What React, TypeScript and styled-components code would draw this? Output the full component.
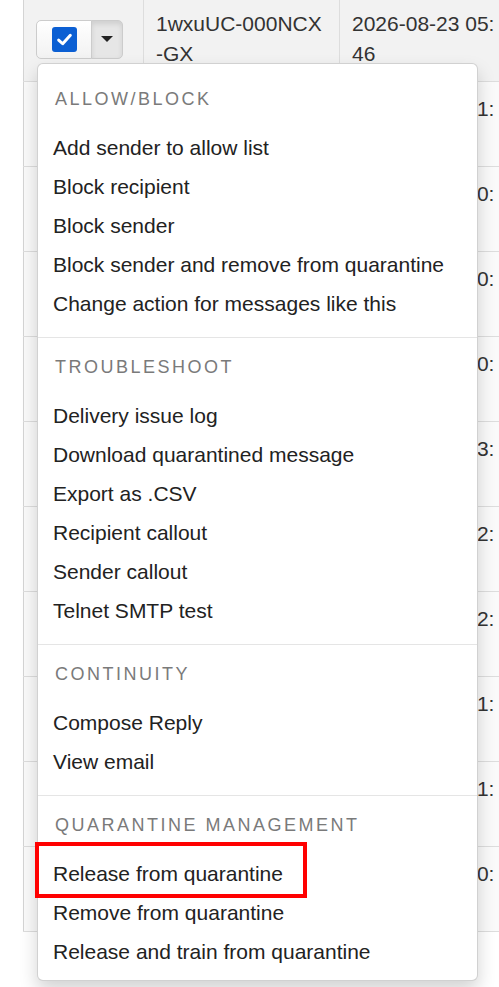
import styled, { createGlobalStyle, css } from 'styled-components'

const GlobalStyle = createGlobalStyle`
  html, body {
    margin: 0;
    padding: 0;
    background: #fff;
  }
  body {
    font-family: "Liberation Sans", Arial, sans-serif;
    font-size: 21px;
    color: #333;
  }
`

const Page = styled.div`
  width: 499px;
  height: 987px;
  overflow: hidden;
  padding-left: 23px;
  box-sizing: border-box;
`

const Table = styled.table`
  margin-top: -3px;
  border-collapse: collapse;
  table-layout: fixed;
  width: 492px;
  border-left: 1px solid #d4d4d4;
`

const Row = styled.tr<{ $active?: boolean }>`
  background: ${({ $active }) => ($active ? '#f2f2f2' : '#fafafa')};
  border-bottom: 1px solid #ddd;
`

const Cell = styled.td<{ $center?: boolean }>`
  height: 60px;
  padding: 12px 14px 12px 12px;
  line-height: 30px;
  vertical-align: ${({ $center }) => ($center ? 'middle' : 'top')};
  word-break: break-all;
  border-right: 1px solid #ddd;
  color: #333;
`

const SelectCell = styled(Cell)`
  padding: 0 0 0 12px;
`

const ButtonGroup = styled.div`
  position: relative;
  display: inline-flex;
  height: 39px;
  vertical-align: middle;
`

const GroupButton = styled.div<{ $open?: boolean }>(
  ({ $open }) => css`
    display: flex;
    align-items: center;
    justify-content: center;
    box-sizing: border-box;
    height: 39px;
    border: 1px solid #ccc;
    ${$open
      ? css`
          width: 32px;
          margin-left: -1px;
          border-radius: 0 5px 5px 0;
          background: #e6e6e6;
          box-shadow: inset 0 3px 5px rgba(0, 0, 0, 0.1);
        `
      : css`
          width: 56px;
          border-radius: 5px 0 0 5px;
          background: linear-gradient(#fff, #f2f2f2);
        `}
  `
)

const CheckBox = styled.span`
  display: flex;
  align-items: center;
  justify-content: center;
  width: 25px;
  height: 25px;
  border-radius: 3px;
  background: #0b5fd3;
`

const Caret = styled.span`
  width: 0;
  height: 0;
  border-top: 6px solid #222;
  border-left: 6px solid transparent;
  border-right: 6px solid transparent;
`

const Menu = styled.div`
  position: absolute;
  top: calc(100% + 4px);
  left: 1px;
  z-index: 10;
  width: 441px;
  box-sizing: border-box;
  padding: 6.5px 0 8.5px;
  background: #fff;
  border: 1px solid rgba(0, 0, 0, 0.18);
  border-radius: 6px;
  box-shadow: 0 9px 18px rgba(0, 0, 0, 0.175);
`

const SectionHeader = styled.div`
  padding: 18.5px 16px 20px 17px;
  font-size: 18px;
  line-height: 20px;
  letter-spacing: 2.5px;
  text-transform: uppercase;
  color: #7a7a7a;
  white-space: nowrap;
`

const Item = styled.div<{ $highlighted?: boolean }>`
  position: relative;
  padding: 4.5px 15px;
  line-height: 30px;
  font-size: 21px;
  color: #222;
  white-space: nowrap;

  ${({ $highlighted }) =>
    $highlighted &&
    css`
      &::after {
        content: '';
        position: absolute;
        left: -3px;
        top: -13px;
        width: 272px;
        height: 56px;
        box-sizing: border-box;
        border: 4px solid #ff0000;
      }
    `}
`

const Divider = styled.div`
  height: 1px;
  margin-top: 13.5px;
  background: #e5e5e5;
`

const sections = [
  {
    title: 'Allow/Block',
    items: [
      'Add sender to allow list',
      'Block recipient',
      'Block sender',
      'Block sender and remove from quarantine',
      'Change action for messages like this',
    ],
  },
  {
    title: 'Troubleshoot',
    items: [
      'Delivery issue log',
      'Download quarantined message',
      'Export as .CSV',
      'Recipient callout',
      'Sender callout',
      'Telnet SMTP test',
    ],
  },
  {
    title: 'Continuity',
    items: ['Compose Reply', 'View email'],
  },
  {
    title: 'Quarantine Management',
    items: [
      'Release from quarantine',
      'Remove from quarantine',
      'Release and train from quarantine',
    ],
  },
]

const rows = [
  { id: '1wxuUC-000NCX-GX', date: '2026-08-23 05:46' },
  { id: '1wxtQa-000MZ4-8K', date: '2026-08-23 01:12' },
  { id: '1wxt2f-000LcR-3D', date: '2026-08-23 00:58' },
  { id: '1wxsZk-000KfT-QW', date: '2026-08-22 20:31' },
  { id: '1wxsBb-000JhN-7M', date: '2026-08-22 20:07' },
  { id: '1wxrPn-000HjW-XE', date: '2026-08-22 13:44' },
  { id: '1wxr4e-000GkA-2P', date: '2026-08-22 12:19' },
  { id: '1wxqUx-000FmC-LZ', date: '2026-08-22 02:53' },
  { id: '1wxq9s-000EnB-TR', date: '2026-08-22 01:36' },
  { id: '1wxpYd-000DpH-6J', date: '2026-08-21 21:05' },
  { id: '1wxpAq-000CqS-VN', date: '2026-08-21 20:40' },
]

const ActionMenu = () => (
  <Menu>
    {sections.map((section, i) => (
      <div key={section.title}>
        {i > 0 && <Divider />}
        <SectionHeader>{section.title}</SectionHeader>
        {section.items.map((item) => (
          <Item key={item} $highlighted={item === 'Release from quarantine'}>
            {item}
          </Item>
        ))}
      </div>
    ))}
  </Menu>
)

export default function App() {
  return (
    <>
      <GlobalStyle />
      <Page>
        <Table>
          <colgroup>
            <col style={{ width: 120 }} />
            <col style={{ width: 196 }} />
            <col style={{ width: 176 }} />
          </colgroup>
          <tbody>
            {rows.map((row, i) => (
              <Row key={row.id} $active={i === 0}>
                <SelectCell $center>
                  {i === 0 && (
                    <ButtonGroup>
                      <GroupButton>
                        <CheckBox>
                          <svg width="17" height="17" viewBox="0 0 16 16">
                            <path
                              d="M2.5 8.5 L6.3 12 L13.5 4"
                              fill="none"
                              stroke="#fff"
                              strokeWidth="2.8"
                              strokeLinecap="round"
                              strokeLinejoin="round"
                            />
                          </svg>
                        </CheckBox>
                      </GroupButton>
                      <GroupButton $open>
                        <Caret />
                      </GroupButton>
                      <ActionMenu />
                    </ButtonGroup>
                  )}
                </SelectCell>
                <Cell>{row.id}</Cell>
                <Cell>{row.date}</Cell>
              </Row>
            ))}
          </tbody>
        </Table>
      </Page>
    </>
  )
}
